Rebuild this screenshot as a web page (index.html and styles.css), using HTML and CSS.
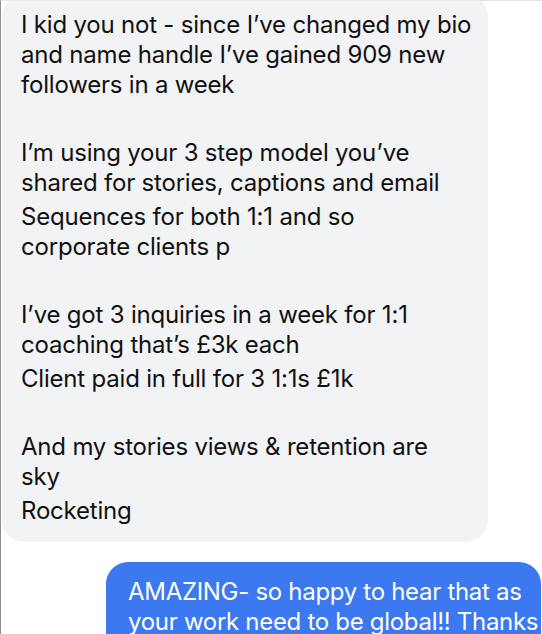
FILE: index.html
```html
<!DOCTYPE html>
<html lang="en">
<head>
    <meta charset="UTF-8">
    <meta name="viewport" content="width=device-width, initial-scale=1.0">
    <title>Messages</title>
    <link rel="stylesheet" href="styles.css">
</head>
<body>
    <div class="thread">
        <div class="bubble incoming">
            <p>I kid you not - since I’ve changed my bio<br>and name handle I’ve gained 909 new<br>followers in a week</p>
            <p class="blank"></p>
            <p>I’m using your 3 step model you’ve<br>shared for stories, captions and email</p>
            <p>Sequences for both 1:1 and so<br>corporate clients p</p>
            <p class="blank"></p>
            <p>I’ve got 3 inquiries in a week for 1:1<br>coaching that’s £3k each</p>
            <p>Client paid in full for 3 1:1s £1k</p>
            <p class="blank"></p>
            <p>And my stories views &amp; retention are<br>sky</p>
            <p>Rocketing</p>
        </div>

        <div class="bubble outgoing">
            <p>AMAZING- so happy to hear that as<br>your work need to be global!! Thanks</p>
        </div>
    </div>
</body>
</html>
```

FILE: styles.css
```css
* {
    margin: 0;
    padding: 0;
    box-sizing: border-box;
}

body {
    background: #ffffff;
    font-family: 'Inter', 'Noto Sans', sans-serif;
    height: 634px;
    overflow: hidden;
}

.thread {
    height: 634px;
    border-left: 1px solid #8e8e93;
    border-top: 1px solid #e4e4e6;
    display: flex;
    flex-direction: column;
    gap: 20px;
    overflow: hidden;
}

.bubble {
    font-size: 24px;
    line-height: 30px;
    border-radius: 22px;
    flex-shrink: 0;
    white-space: nowrap;
}

.bubble p {
    margin-bottom: 4px;
}

.bubble p.blank {
    height: 30px;
}

.incoming {
    background-color: #f2f3f5;
    color: #111111;
    width: 486px;
    margin: -6px 0 0 1px;
    padding: 15px 16px 12px 19px;
    letter-spacing: -0.2px;
}

.outgoing {
    background-color: #3c78f0;
    color: #ffffff;
    width: 435px;
    margin-left: 105px;
    padding: 15px 0 15px 22px;
    letter-spacing: -0.3px;
}
```
